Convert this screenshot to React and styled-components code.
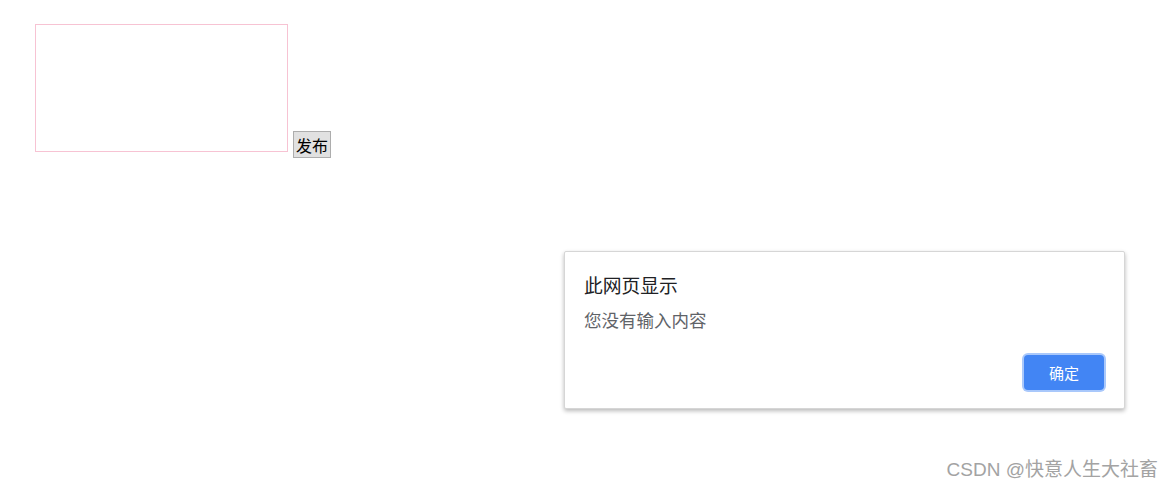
import styled, { createGlobalStyle } from "styled-components";

const GlobalStyle = createGlobalStyle`
    html, body {
        margin: 0;
        padding: 0;
        background: #ffffff;
    }

    body {
        font-family: "Liberation Sans", "Noto Sans CJK SC", sans-serif;
    }
`;

const Page = styled.div`
    position: relative;
    width: 1174px;
    height: 489px;
    box-sizing: border-box;
    padding: 24px 0 0 35px;
    overflow: hidden;
`;

const Row = styled.div`
    display: flex;
    align-items: flex-start;
    gap: 5px;
`;

const Input = styled.textarea`
    width: 253px;
    height: 128px;
    box-sizing: border-box;
    border: 1px solid #f7c3d3;
    outline: none;
    resize: none;
    padding: 2px;
    font-family: inherit;
`;

const PublishButton = styled.button`
    margin-top: 107px;
    height: 27px;
    padding: 0 2px;
    font-size: 16px;
    font-family: "Noto Sans CJK SC", sans-serif;
    color: #000000;
    background: #e1e1e1;
    border: 1px solid #adadad;
    border-radius: 0;
    line-height: 22px;
`;

const Dialog = styled.div`
    position: absolute;
    left: 564px;
    top: 251px;
    width: 561px;
    height: 158px;
    box-sizing: border-box;
    background: #ffffff;
    border: 1px solid #d6d6d6;
    border-radius: 2px;
    box-shadow: 0 2px 4px rgba(0, 0, 0, 0.28);
    padding: 19px 20px 18px 19px;
    display: flex;
    flex-direction: column;
    font-family: "Noto Sans CJK SC", sans-serif;
`;

const Title = styled.div`
    font-size: 18.8px;
    line-height: 28px;
    color: #202124;
`;

const Message = styled.div`
    margin-top: 7px;
    font-size: 17.5px;
    line-height: 28px;
    color: #5f6368;
`;

const Actions = styled.div`
    margin-top: auto;
    display: flex;
    justify-content: flex-end;
`;

const OkButton = styled.button`
    width: 80px;
    height: 35px;
    box-sizing: border-box;
    background: #4285f4;
    color: #ffffff;
    border: none;
    border-radius: 4px;
    box-shadow: 0 0 0 2px #a9c8fb;
    font-size: 15px;
    font-family: "Noto Sans CJK SC", sans-serif;
    cursor: pointer;
`;

const Watermark = styled.div`
    position: absolute;
    right: 16px;
    bottom: 8px;
    font-size: 19px;
    color: #a3a3a3;
    font-family: "Liberation Sans", "Noto Sans CJK SC", sans-serif;
    white-space: nowrap;
`;

const App = () => {
    return (
        <>
            <GlobalStyle />
            <Page>
                <Row>
                    <Input />
                    <PublishButton>发布</PublishButton>
                </Row>

                <Dialog>
                    <Title>此网页显示</Title>
                    <Message>您没有输入内容</Message>
                    <Actions>
                        <OkButton>确定</OkButton>
                    </Actions>
                </Dialog>

                <Watermark>CSDN @快意人生大社畜</Watermark>
            </Page>
        </>
    );
};

export default App;
